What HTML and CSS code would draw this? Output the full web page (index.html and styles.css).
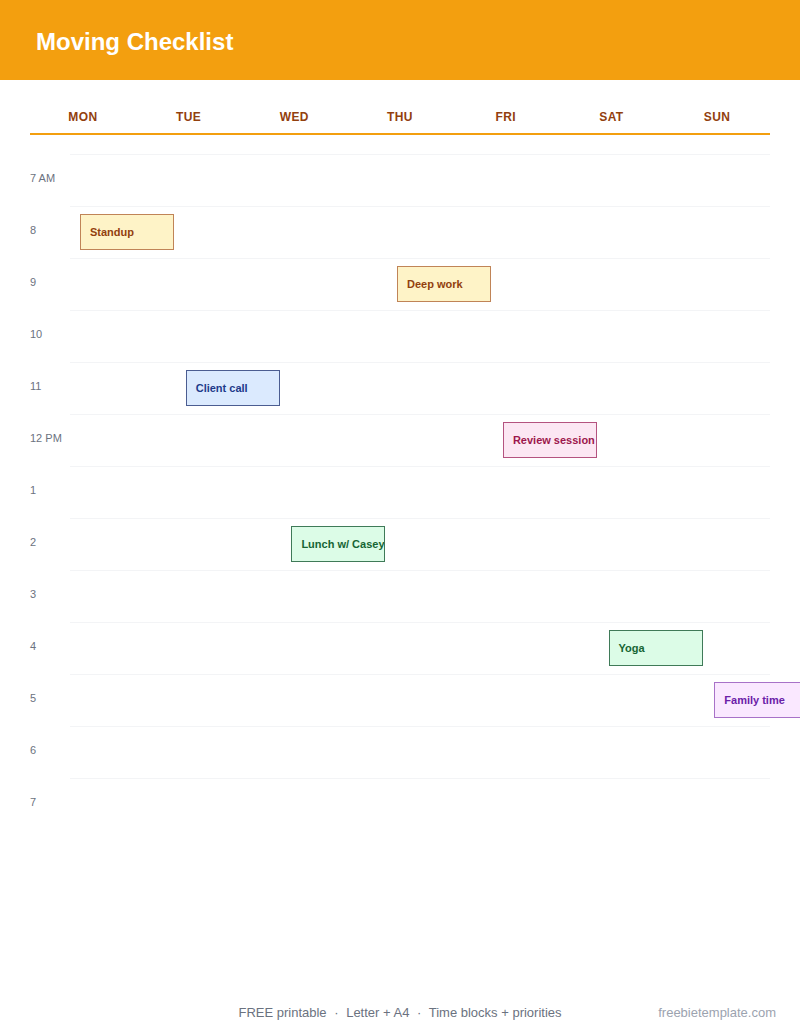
FILE: index.html
```html
<!DOCTYPE html>
<html>
<head>
<meta charset="utf-8">
<link rel="stylesheet" href="styles.css">
</head>
<body>
<div class="page">
  <header class="banner"><h1 class="title">Moving Checklist</h1></header>
  <main class="planner">
    <div class="days">
      <div class="day">MON</div><div class="day">TUE</div><div class="day">WED</div><div class="day">THU</div><div class="day">FRI</div><div class="day">SAT</div><div class="day">SUN</div>
    </div>
    <div class="grid">
      <div class="row"><span class="hour">7 AM</span><span class="cell"></span></div>
      <div class="row"><span class="hour">8</span><span class="cell"></span></div>
      <div class="row"><span class="hour">9</span><span class="cell"></span></div>
      <div class="row"><span class="hour">10</span><span class="cell"></span></div>
      <div class="row"><span class="hour">11</span><span class="cell"></span></div>
      <div class="row"><span class="hour">12 PM</span><span class="cell"></span></div>
      <div class="row"><span class="hour">1</span><span class="cell"></span></div>
      <div class="row"><span class="hour">2</span><span class="cell"></span></div>
      <div class="row"><span class="hour">3</span><span class="cell"></span></div>
      <div class="row"><span class="hour">4</span><span class="cell"></span></div>
      <div class="row"><span class="hour">5</span><span class="cell"></span></div>
      <div class="row"><span class="hour">6</span><span class="cell"></span></div>
      <div class="row"><span class="hour">7</span><span class="cell"></span></div>

      <div class="event ev-amber" style="left:50px;top:60px">Standup</div>
      <div class="event ev-amber" style="left:367px;top:112px">Deep work</div>
      <div class="event ev-blue" style="left:155.7px;top:216px">Client call</div>
      <div class="event ev-pink" style="left:472.9px;top:268px">Review session</div>
      <div class="event ev-green" style="left:261.4px;top:372px">Lunch w/ Casey</div>
      <div class="event ev-green" style="left:578.6px;top:476px">Yoga</div>
      <div class="event ev-purple" style="left:684.3px;top:528px">Family time</div>
    </div>
  </main>
  <footer class="footer">
    <span></span>
    <span class="meta">FREE printable <span class="dot">·</span> Letter + A4 <span class="dot">·</span> Time blocks + priorities</span>
    <span class="site">freebietemplate.com</span>
  </footer>
</div>
</body>
</html>
```

FILE: styles.css
```css
* { box-sizing: border-box; }
html, body { margin: 0; padding: 0; }
body {
  font-family: "Liberation Sans", Arial, sans-serif;
  background: #ffffff;
  overflow: hidden;
}
.page {
  width: 800px;
  height: 1035px;
  display: flex;
  flex-direction: column;
}
.banner {
  height: 80px;
  background: #f39f0f;
  display: flex;
  align-items: center;
  padding: 0 36px;
}
.title {
  margin: 0;
  color: #ffffff;
  font-size: 24px;
  font-weight: 700;
  letter-spacing: 0;
  padding-top: 3px;
}
.planner {
  padding: 20px 30px 0;
}
.days {
  display: grid;
  grid-template-columns: repeat(7, 1fr);
  border-bottom: 2px solid #f39f0f;
  padding: 10px 0 8px;
}
.day {
  text-align: center;
  font-size: 12px;
  line-height: 15px;
  font-weight: 700;
  color: #92400e;
  letter-spacing: 0.4px;
}
.grid {
  position: relative;
  margin-top: 19px;
}
.row {
  display: flex;
  height: 52px;
}
.hour {
  width: 40px;
  font-size: 11px;
  color: #6b7280;
  display: flex;
  align-items: center;
  padding-bottom: 5px;
}
.cell {
  flex: 1;
  border-top: 1px solid #f3f4f6;
}
.event {
  position: absolute;
  width: 94px;
  height: 36px;
  display: flex;
  align-items: center;
  padding-left: 9px;
  font-size: 11px;
  font-weight: 700;
  white-space: nowrap;
  overflow: hidden;
  border: 1px solid;
}
.ev-amber { background: #fef3c7; border-color: #c08457; color: #92400e; }
.ev-blue { background: #dbeafe; border-color: #4b5d91; color: #1e3a8a; }
.ev-pink { background: #fce7f3; border-color: #b4537f; color: #9d174d; }
.ev-green { background: #dcfce7; border-color: #3f7a58; color: #166534; }
.ev-purple { background: #fae8ff; border-color: #a872c8; color: #6b21a8; width: 110px; }
.footer {
  margin-top: auto;
  display: grid;
  grid-template-columns: 1fr auto 1fr;
  align-items: center;
  padding: 0 24px 13px;
  line-height: 18px;
  font-size: 13px;
}
.meta { color: #6b7280; }
.dot { margin: 0 4px; }
.site { justify-self: end; color: #9ca3af; }
```
